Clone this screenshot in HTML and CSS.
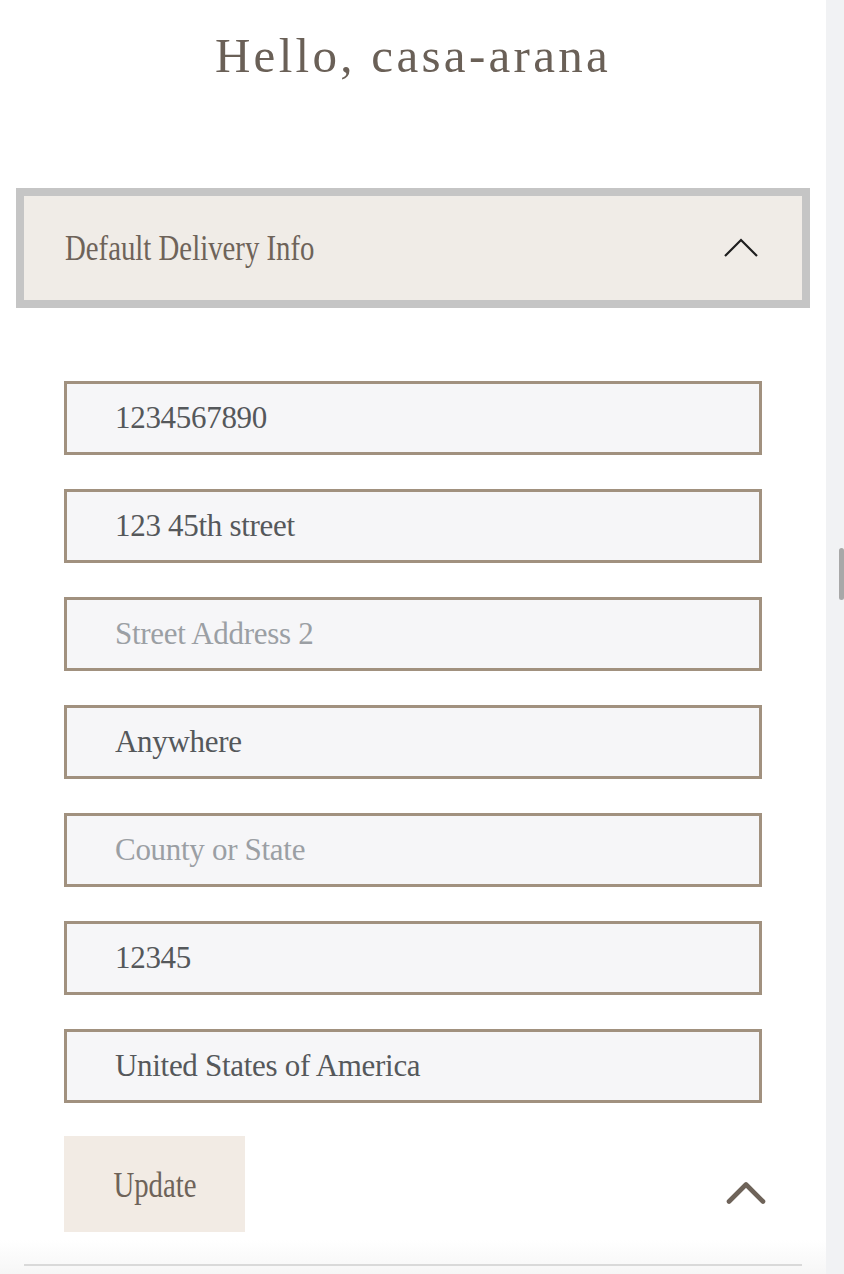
FILE: index.html
```html
<!DOCTYPE html>
<html lang="en">
<head>
<meta charset="utf-8">
<title>Account</title>
<link rel="stylesheet" href="styles.css">
</head>
<body>
<div class="page">
  <main class="content">
    <h1 class="greeting">Hello, casa-arana</h1>

    <section class="accordion">
      <div class="accordion-head">
        <span class="accordion-title">Default Delivery Info</span>
        <svg class="chev-thin" width="34" height="19" viewBox="0 0 34 19" aria-hidden="true">
          <polyline points="1,18 17,2 33,18" fill="none" stroke="#1f1f1f" stroke-width="2.2"/>
        </svg>
      </div>
    </section>

    <form class="delivery-form">
      <input class="field" type="text" value="1234567890">
      <input class="field" type="text" value="123 45th street">
      <input class="field" type="text" placeholder="Street Address 2">
      <input class="field" type="text" value="Anywhere">
      <input class="field" type="text" placeholder="County or State">
      <input class="field" type="text" value="12345">
      <input class="field" type="text" value="United States of America">
    </form>

    <div class="actions">
      <button class="update-btn" type="button"><span class="update-label">Update</span></button>
      <svg class="chev-bold" width="40" height="24" viewBox="0 0 40 24" aria-hidden="true">
        <polyline points="3,20.5 20,3.5 37,20.5" fill="none" stroke="#6e6359" stroke-width="4.6" stroke-linecap="round" stroke-linejoin="round"/>
      </svg>
    </div>

    <div class="footer-fade">
      <div class="rule"></div>
    </div>
  </main>
  <aside class="scrollbar"><div class="thumb"></div></aside>
</div>
</body>
</html>
```
FILE: styles.css
```css
html, body {
  margin: 0;
  padding: 0;
  background: #ffffff;
  overflow: hidden;
}

.page {
  display: flex;
  width: 844px;
  height: 1274px;
}

.content {
  width: 826px;
  box-sizing: border-box;
  padding: 0 16px;
  display: flex;
  flex-direction: column;
}

.greeting {
  margin: 31px 0 0;
  height: 49px;
  font-family: "Liberation Serif", "Times New Roman", serif;
  font-weight: normal;
  font-size: 49px;
  line-height: 49px;
  letter-spacing: 3.3px;
  color: #6a6057;
  text-align: center;
}

.accordion {
  margin-top: 108px;
  border: 8px solid #c5c5c5;
  background: #f0ece7;
}

.accordion-head {
  height: 104px;
  display: flex;
  align-items: center;
  justify-content: space-between;
  padding: 0 44px 0 41px;
}

.accordion-title {
  display: inline-block;
  font-family: "Liberation Serif", "Times New Roman", serif;
  font-size: 36px;
  line-height: 40px;
  color: #6e6359;
  transform: scaleX(0.8);
  transform-origin: left center;
  white-space: nowrap;
}

.chev-thin {
  display: block;
  margin-top: -1px;
}

.delivery-form {
  margin-top: 73px;
  padding: 0 48px;
  display: flex;
  flex-direction: column;
  gap: 34px;
}

.field {
  display: block;
  width: 100%;
  height: 74px;
  box-sizing: border-box;
  margin: 0;
  border: 3px solid #a1917f;
  border-radius: 0;
  background: #f6f6f8;
  padding: 0 20px 0 48px;
  font-family: "Liberation Serif", "Times New Roman", serif;
  font-size: 31px;
  letter-spacing: -0.3px;
  color: #55585b;
  outline: none;
}

.field::placeholder {
  color: #9b9fa4;
  opacity: 1;
}

.actions {
  margin-top: 33px;
  padding: 0 44px 0 48px;
  display: flex;
  justify-content: space-between;
  align-items: flex-start;
}

.update-btn {
  width: 181px;
  height: 96px;
  border: none;
  border-radius: 0;
  background: #f2ebe4;
  padding: 0;
  display: flex;
  align-items: center;
  justify-content: center;
  cursor: pointer;
}

.update-label {
  display: inline-block;
  font-family: "Liberation Serif", "Times New Roman", serif;
  font-size: 36px;
  line-height: 40px;
  color: #6e6359;
  transform: scaleX(0.8);
  margin-top: 2px;
}

.chev-bold {
  display: block;
  margin-top: 45px;
}

.footer-fade {
  margin: 8px -16px 0;
  padding: 24px 24px 0;
  height: 34px;
  box-sizing: border-box;
  background: linear-gradient(#ffffff, #f6f6f6);
}

.rule {
  height: 2px;
  background: #d9d9d9;
}

.scrollbar {
  width: 18px;
  background: #f1f2f4;
  box-sizing: border-box;
  padding: 548px 0 0 13px;
}

.thumb {
  width: 5px;
  height: 52px;
  border-radius: 3px;
  background: #a8a8a8;
}
```
